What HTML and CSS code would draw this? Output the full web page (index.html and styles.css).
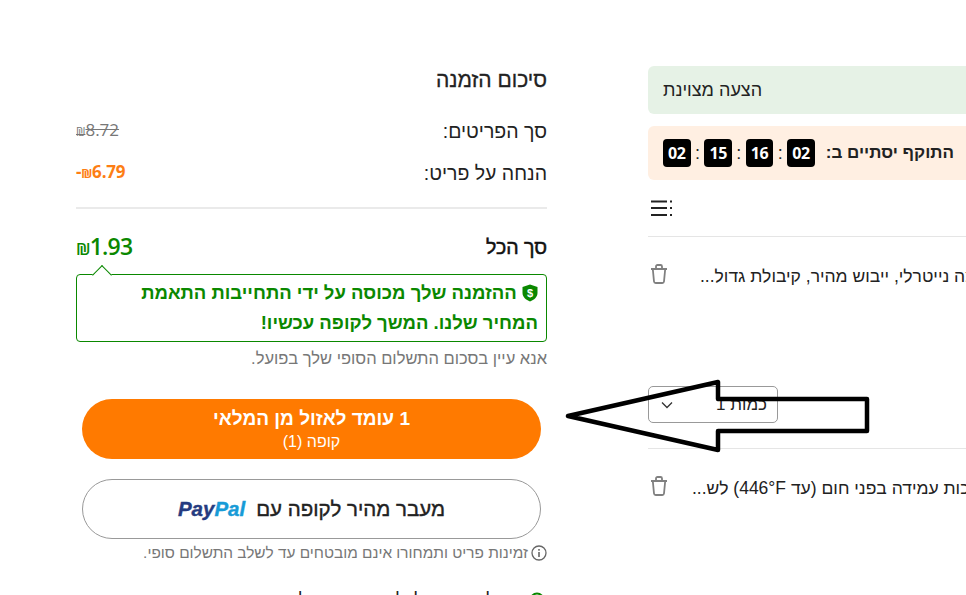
FILE: index.html
```html
<!DOCTYPE html>
<html lang="he">
<head>
    <meta charset="UTF-8">
    <title>סיכום הזמנה</title>
    <link rel="stylesheet" href="styles.css">
</head>
<body>
    <div class="page">
        <section class="summary" dir="rtl">
            <h2 class="summary-title">סיכום הזמנה</h2>
            <div class="row row-items">
                <span>סך הפריטים:</span>
                <span class="price-old" dir="ltr"><small>₪</small>8.72</span>
            </div>
            <div class="row row-discount">
                <span>הנחה על פריט:</span>
                <span class="price-off" dir="ltr">-<small>₪</small>6.79</span>
            </div>
            <div class="divider"></div>
            <div class="row row-total">
                <span class="total-label">סך הכל</span>
                <span class="total-price" dir="ltr"><small>₪</small>1.93</span>
            </div>
            <div class="match-box">
                <svg class="shield" viewBox="0 0 16 18" width="16" height="18">
                    <path d="M8 0.5 L15.5 3 V9 C15.5 13 12 16 8 17.5 C4 16 0.5 13 0.5 9 V3 Z" fill="#0a8800"/>
                    <text x="8" y="13" text-anchor="middle" font-size="11" font-weight="700" fill="#fff">$</text>
                </svg>
                ההזמנה שלך מכוסה על ידי התחייבות התאמת המחיר שלנו. המשך לקופה עכשיו!
            </div>
            <p class="note">אנא עיין בסכום התשלום הסופי שלך בפועל.</p>
            <div class="btn btn-checkout">
                <b>1 עומד לאזול מן המלאי</b>
                <span>קופה (1)</span>
            </div>
            <div class="btn btn-paypal">
                <span>מעבר מהיר לקופה עם</span>
                <span class="paypal" dir="ltr"><i class="pay">Pay</i><i class="pal">Pal</i></span>
            </div>
            <p class="stock-note">
                <svg viewBox="0 0 16 16" width="16" height="16">
                    <circle cx="8" cy="8" r="7" fill="none" stroke="#666" stroke-width="1.3"/>
                    <rect x="7.2" y="7" width="1.6" height="5" fill="#666"/>
                    <rect x="7.2" y="4" width="1.6" height="1.7" fill="#666"/>
                </svg>
                זמינות פריט ותמחורו אינם מובטחים עד לשלב התשלום סופי.
            </p>
            <div class="delivery">
                <svg viewBox="0 0 16 16" width="16" height="16">
                    <circle cx="8" cy="8" r="6.5" fill="none" stroke="#0a8800" stroke-width="2"/>
                </svg>
                <span>משלוח חינם לכל ההזמנות שלך היום</span>
            </div>
        </section>

        <section class="cart" dir="rtl">
            <div class="banner banner-green">הצעה מצוינת</div>
            <div class="banner banner-orange">
                <b class="timer-label">התוקף יסתיים ב:</b>
                <span class="digit">02</span><span class="sep">:</span>
                <span class="digit">16</span><span class="sep">:</span>
                <span class="digit">15</span><span class="sep">:</span>
                <span class="digit">02</span>
            </div>
            <div class="toolbar">
                <svg viewBox="0 0 22 17" width="22" height="17">
                    <path d="M0 1.5H16M0 8H16M0 15H16" stroke="#222" stroke-width="2"/>
                    <path d="M19 1.5H21M19 8H21M19 15H21" stroke="#222" stroke-width="2"/>
                </svg>
            </div>
            <div class="cart-item">
                <span class="item-name">מגבת רחצה נייטרלי, ייבוש מהיר, קיבולת גדול...</span>
                <svg class="trash" viewBox="0 0 18 20" width="18" height="20">
                    <path d="M1 5H17M6 5V2.5C6 1.7 6.7 1 7.5 1H10.5C11.3 1 12 1.7 12 2.5V5M2.8 5L4 17.5C4.1 18.4 4.8 19 5.7 19H12.3C13.2 19 13.9 18.4 14 17.5L15.2 5" fill="none" stroke="#808080" stroke-width="1.8"/>
                </svg>
            </div>
            <div class="qty">
                <span>כמות 1</span>
                <svg viewBox="0 0 12 8" width="12" height="8">
                    <path d="M1 1.5L6 6.5L11 1.5" fill="none" stroke="#333" stroke-width="1.3"/>
                </svg>
            </div>
            <div class="cart-item cart-item-second">
                <span class="item-name">איכות עמידה בפני חום (עד 446°F) לש...</span>
                <svg class="trash" viewBox="0 0 18 20" width="18" height="20">
                    <path d="M1 5H17M6 5V2.5C6 1.7 6.7 1 7.5 1H10.5C11.3 1 12 1.7 12 2.5V5M2.8 5L4 17.5C4.1 18.4 4.8 19 5.7 19H12.3C13.2 19 13.9 18.4 14 17.5L15.2 5" fill="none" stroke="#808080" stroke-width="1.8"/>
                </svg>
            </div>
        </section>
    </div>

    <!-- hand drawn arrow on top of the screenshot -->
    <svg class="arrow" viewBox="0 0 310 74" width="310" height="74">
        <path d="M3 37 L153 3 V20 H302 V52 H153 V71 Z" fill="none" stroke="#000" stroke-width="4.5" stroke-linejoin="round"/>
    </svg>
</body>
</html>
```

FILE: styles.css
```css
* {
    margin: 0;
    padding: 0;
    box-sizing: border-box;
}

html, body {
    height: 595px;
    overflow: hidden;
}

body {
    font-family: "Liberation Sans", sans-serif;
    background-color: #fff;
    color: #222;
    position: relative;
}

.page {
    display: flex;
    align-items: flex-start;
    padding-left: 76px;
    width: 1300px;
}

/* left column */
.summary {
    flex: none;
    width: 471px;
    padding-top: 66px;
}

.summary-title {
    font-size: 21px;
    font-weight: 400;
    line-height: 28px;
    -webkit-text-stroke: 0.3px #222;
}

.row {
    display: flex;
    justify-content: space-between;
    align-items: center;
    height: 28px;
    font-size: 19.5px;
    line-height: 28px;
}

.row small {
    font-size: 12px;
}

.row-items {
    margin-top: 23px;
}

.row-discount {
    margin-top: 14px;
}

.divider {
    height: 2px;
    margin-top: 20px;
    background-color: #eaeaea;
}

.price-old,
.price-off,
.total-price {
    font-family: "Open Sans", sans-serif;
}

.price-old {
    color: #777;
    font-size: 17px;
    text-decoration: line-through;
}

.price-off {
    color: #fd7e14;
    font-size: 17px;
    font-weight: 700;
    letter-spacing: -0.2px;
}

.row-total {
    margin-top: 24px;
}

.total-label {
    color: #111;
    -webkit-text-stroke: 0.5px #111;
}

.total-price {
    color: #0a8800;
    font-size: 23px;
    font-weight: 600;
    letter-spacing: -0.8px;
}

.total-price small {
    font-size: 17px;
}

.match-box {
    position: relative;
    margin-top: 13px;
    height: 68px;
    padding: 3px 8px 0 8px;
    border: 1px solid #0a8800;
    border-radius: 4px;
    color: #0a8800;
    font-size: 18.5px;
    font-weight: 700;
    line-height: 30px;
}

.match-box::before {
    content: "";
    position: absolute;
    left: 18px;
    top: -7px;
    width: 13px;
    height: 13px;
    background: #fff;
    border-top: 1px solid #0a8800;
    border-left: 1px solid #0a8800;
    transform: rotate(45deg);
}

.shield {
    vertical-align: -3px;
}

.note {
    margin-top: 5px;
    color: #777;
    font-size: 16.5px;
    line-height: 22px;
}

.btn {
    display: flex;
    justify-content: center;
    align-items: center;
    width: 459px;
    height: 60px;
    margin: 0 6px;
    border-radius: 30px;
}

.btn-checkout {
    flex-direction: column;
    margin-top: 30px;
    background-color: #ff7a00;
    color: #fff;
    font-size: 16px;
    line-height: 20px;
}

.btn-checkout b {
    font-size: 19px;
    font-weight: 700;
    line-height: 26px;
}

.btn-paypal {
    gap: 11px;
    margin-top: 20px;
    border: 1px solid #999;
    font-size: 20.5px;
    -webkit-text-stroke: 0.4px #222;
}

.paypal {
    font-size: 20.5px;
    font-weight: 700;
}

.pay {
    color: #253b80;
    -webkit-text-stroke: 0.4px #253b80;
}

.pal {
    color: #179bd7;
    -webkit-text-stroke: 0.4px #179bd7;
}

.stock-note {
    display: flex;
    align-items: center;
    gap: 3px;
    margin-top: 4px;
    color: #777;
    font-size: 15.4px;
    line-height: 20px;
}

.delivery {
    display: flex;
    align-items: flex-start;
    gap: 8px;
    margin-top: 29px;
    padding-right: 2px;
    font-size: 18px;
}

.delivery span {
    margin-top: -2px;
}

/* right column */
.cart {
    flex: none;
    width: 500px;
    margin-left: 101px;
    padding-top: 66px;
}

.banner {
    display: flex;
    align-items: center;
    justify-content: flex-end;
    padding-left: 15px;
    border-radius: 6px;
    font-size: 18px;
}

.banner-green {
    height: 48px;
    background-color: #e6f2e6;
}

.banner-orange {
    height: 54px;
    margin-top: 12px;
    padding-right: 194px;
    background-color: #ffefe2;
    justify-content: flex-start;
}

.timer-label {
    margin-left: 11px;
    font-size: 17px;
    font-weight: 700;
    white-space: nowrap;
}

.digit {
    width: 28px;
    height: 28px;
    background-color: #000;
    border-radius: 4px;
    color: #fff;
    font-family: "Open Sans", sans-serif;
    font-size: 16px;
    font-weight: 700;
    letter-spacing: -0.4px;
    line-height: 28px;
    text-align: center;
}

.sep {
    width: 14px;
    text-align: center;
}

.toolbar {
    display: flex;
    justify-content: flex-end;
    height: 57px;
    padding: 20px 0 0 3px;
    border-bottom: 1px solid #e5e5e5;
}

.cart-item {
    display: flex;
    justify-content: flex-end;
    align-items: center;
    gap: 32px;
    height: 20px;
    margin-top: 27px;
    padding-left: 2px;
    font-size: 17.5px;
}

.item-name {
    margin-top: 4px;
    white-space: nowrap;
}

.qty {
    display: flex;
    justify-content: space-between;
    align-items: center;
    width: 130px;
    height: 37px;
    margin: 102px 370px 0 0;
    padding: 0 10px 0 12px;
    border: 1px solid #999;
    border-radius: 5px;
    font-size: 17px;
}

.cart-item-second {
    gap: 24px;
    margin-top: 53px;
    position: relative;
}

.cart-item-second::before {
    content: "";
    position: absolute;
    left: 0;
    right: 0;
    top: -28px;
    border-top: 1px solid #e5e5e5;
}

/* annotation drawn over the page */
.arrow {
    position: absolute;
    left: 565px;
    top: 379px;
}
```
